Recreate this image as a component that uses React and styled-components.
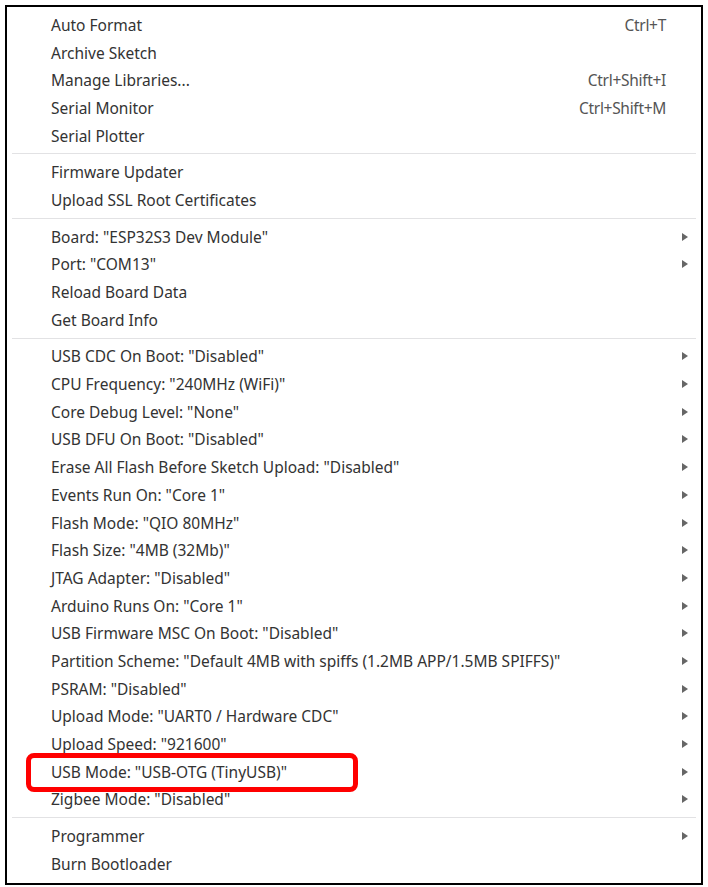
import React from "react";
import styled, { createGlobalStyle } from "styled-components";

const GlobalStyle = createGlobalStyle`
  body {
    margin: 0;
    background: #fff;
    font-family: "Noto Sans", "Open Sans", sans-serif;
  }
`;

const groups = [
  [
    { label: "Auto Format", shortcut: "Ctrl+T" },
    { label: "Archive Sketch" },
    { label: "Manage Libraries...", shortcut: "Ctrl+Shift+I" },
    { label: "Serial Monitor", shortcut: "Ctrl+Shift+M" },
    { label: "Serial Plotter" },
  ],
  [{ label: "Firmware Updater" }, { label: "Upload SSL Root Certificates" }],
  [
    { label: 'Board: "ESP32S3 Dev Module"', sub: true },
    { label: 'Port: "COM13"', sub: true },
    { label: "Reload Board Data" },
    { label: "Get Board Info" },
  ],
  [
    { label: 'USB CDC On Boot: "Disabled"', sub: true },
    { label: 'CPU Frequency: "240MHz (WiFi)"', sub: true },
    { label: 'Core Debug Level: "None"', sub: true },
    { label: 'USB DFU On Boot: "Disabled"', sub: true },
    { label: 'Erase All Flash Before Sketch Upload: "Disabled"', sub: true },
    { label: 'Events Run On: "Core 1"', sub: true },
    { label: 'Flash Mode: "QIO 80MHz"', sub: true },
    { label: 'Flash Size: "4MB (32Mb)"', sub: true },
    { label: 'JTAG Adapter: "Disabled"', sub: true },
    { label: 'Arduino Runs On: "Core 1"', sub: true },
    { label: 'USB Firmware MSC On Boot: "Disabled"', sub: true },
    {
      label:
        'Partition Scheme: "Default 4MB with spiffs (1.2MB APP/1.5MB SPIFFS)"',
      sub: true,
    },
    { label: 'PSRAM: "Disabled"', sub: true },
    { label: 'Upload Mode: "UART0 / Hardware CDC"', sub: true },
    { label: 'Upload Speed: "921600"', sub: true },
    { label: 'USB Mode: "USB-OTG (TinyUSB)"', sub: true },
    { label: 'Zigbee Mode: "Disabled"', sub: true },
  ],
  [{ label: "Programmer", sub: true }, { label: "Burn Bootloader" }],
];

const App = () => {
  return (
    <>
      <GlobalStyle />
      <Page>
        <Menu>
          {groups.map((items, gi) => (
            <React.Fragment key={gi}>
              {gi > 0 && <Separator />}
              {items.map((item) => (
                <Row key={item.label}>
                  <Label>{item.label}</Label>
                  {item.shortcut && <Shortcut>{item.shortcut}</Shortcut>}
                  {item.sub && <Arrow />}
                </Row>
              ))}
            </React.Fragment>
          ))}
          <Highlight />
        </Menu>
      </Page>
    </>
  );
};

export default App;

const Page = styled.div`
  padding: 5px;
`;

const Menu = styled.div`
  position: relative;
  width: 698px;
  height: 880px;
  box-sizing: border-box;
  border: 2px solid #000;
  background: #fff;
  padding: 4px 0 5px;
  display: flex;
  flex-direction: column;
`;

const Row = styled.div`
  height: 27.7px;
  flex-shrink: 0;
  display: flex;
  align-items: center;
  padding: 0 0 0 44px;
  font-size: 15.5px;
  color: #333;
`;

const Label = styled.span`
  flex: 1;
  white-space: nowrap;
`;

const Shortcut = styled.span`
  color: #555;
  margin-right: 35px;
  letter-spacing: -0.3px;
`;

const Arrow = styled.span`
  width: 0;
  height: 0;
  border-top: 4px solid transparent;
  border-bottom: 4px solid transparent;
  border-left: 6px solid #666;
  margin-right: 13px;
`;

const Separator = styled.div`
  flex-shrink: 0;
  height: 1px;
  margin: 4px 5px 4px 5px;
  background: #e2e2e4;
`;

const Highlight = styled.div`
  position: absolute;
  left: 19px;
  top: 746px;
  width: 332px;
  height: 39px;
  box-sizing: border-box;
  border: 5px solid #f00;
  border-radius: 8px;
`;
